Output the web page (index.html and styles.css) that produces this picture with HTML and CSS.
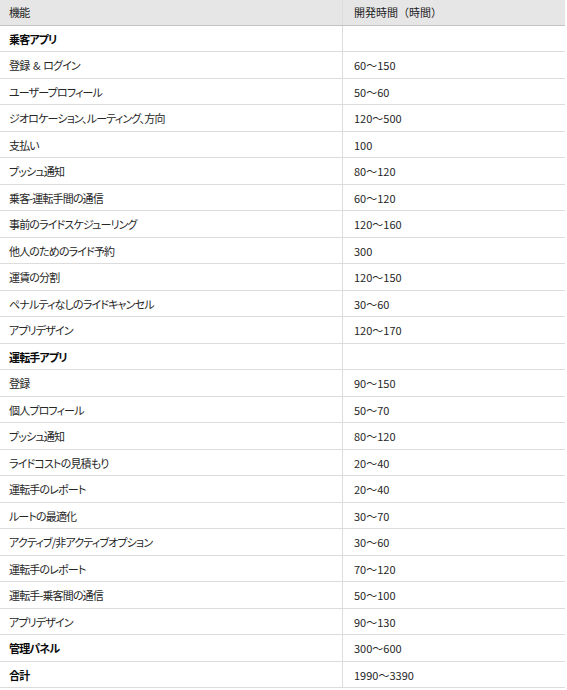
FILE: index.html
```html
<!DOCTYPE html>
<html lang="ja">
<head>
<meta charset="utf-8">
<link rel="stylesheet" href="styles.css">
</head>
<body>
<table class="dev-table">
  <thead>
    <tr><th class="col-feature">機能</th><th class="col-hours">開発時間（時間）</th></tr>
  </thead>
  <tbody>
    <tr class="section"><td>乗客アプリ</td><td></td></tr>
    <tr><td>登録 &amp; ログイン</td><td>60〜150</td></tr>
    <tr><td>ユーザープロフィール</td><td>50〜60</td></tr>
    <tr><td>ジオロケーション、ルーティング、方向</td><td>120〜500</td></tr>
    <tr><td>支払い</td><td>100</td></tr>
    <tr><td>プッシュ通知</td><td>80〜120</td></tr>
    <tr><td>乗客-運転手間の通信</td><td>60〜120</td></tr>
    <tr><td>事前のライドスケジューリング</td><td>120〜160</td></tr>
    <tr><td>他人のためのライド予約</td><td>300</td></tr>
    <tr><td>運賃の分割</td><td>120〜150</td></tr>
    <tr><td>ペナルティなしのライドキャンセル</td><td>30〜60</td></tr>
    <tr><td>アプリデザイン</td><td>120〜170</td></tr>
    <tr class="section"><td>運転手アプリ</td><td></td></tr>
    <tr><td>登録</td><td>90〜150</td></tr>
    <tr><td>個人プロフィール</td><td>50〜70</td></tr>
    <tr><td>プッシュ通知</td><td>80〜120</td></tr>
    <tr><td>ライドコストの見積もり</td><td>20〜40</td></tr>
    <tr><td>運転手のレポート</td><td>20〜40</td></tr>
    <tr><td>ルートの最適化</td><td>30〜70</td></tr>
    <tr><td>アクティブ/非アクティブオプション</td><td>30〜60</td></tr>
    <tr><td>運転手のレポート</td><td>70〜120</td></tr>
    <tr><td>運転手-乗客間の通信</td><td>50〜100</td></tr>
    <tr><td>アプリデザイン</td><td>90〜130</td></tr>
    <tr class="section"><td>管理パネル</td><td>300〜600</td></tr>
    <tr class="section"><td>合計</td><td>1990〜3390</td></tr>
  </tbody>
</table>
</body>
</html>
```
FILE: styles.css
```css
html, body {
  margin: 0;
  padding: 0;
  background: #ffffff;
}
body {
  font-family: "Noto Sans CJK JP", "Noto Sans", sans-serif;
  font-size: 11px;
  color: #262626;
}
.dev-table {
  width: 565px;
  border-collapse: collapse;
  table-layout: fixed;
}
.dev-table th,
.dev-table td {
  text-align: left;
  padding: 5px 10px 3px 9px;
  line-height: 17.5px;
  font-weight: normal;
  border-bottom: 1px solid #dcdcdc;
  white-space: nowrap;
}
.dev-table th:first-child,
.dev-table td:first-child {
  font-feature-settings: "palt";
  letter-spacing: -0.85px;
  word-spacing: 2px;
}
.dev-table th {
  background: #e6e6e6;
  color: #1e1e1e;
  padding-top: 4px;
  padding-bottom: 3px;
  border-bottom: 1px solid #c2c2c2;
}
.dev-table .col-feature {
  width: 323px;
}
.dev-table th + th,
.dev-table td + td {
  border-left: 1px solid #dcdcdc;
  padding-left: 11px;
}
.dev-table tr.section td:first-child {
  font-weight: bold;
  color: #0a0a0a;
}
```
